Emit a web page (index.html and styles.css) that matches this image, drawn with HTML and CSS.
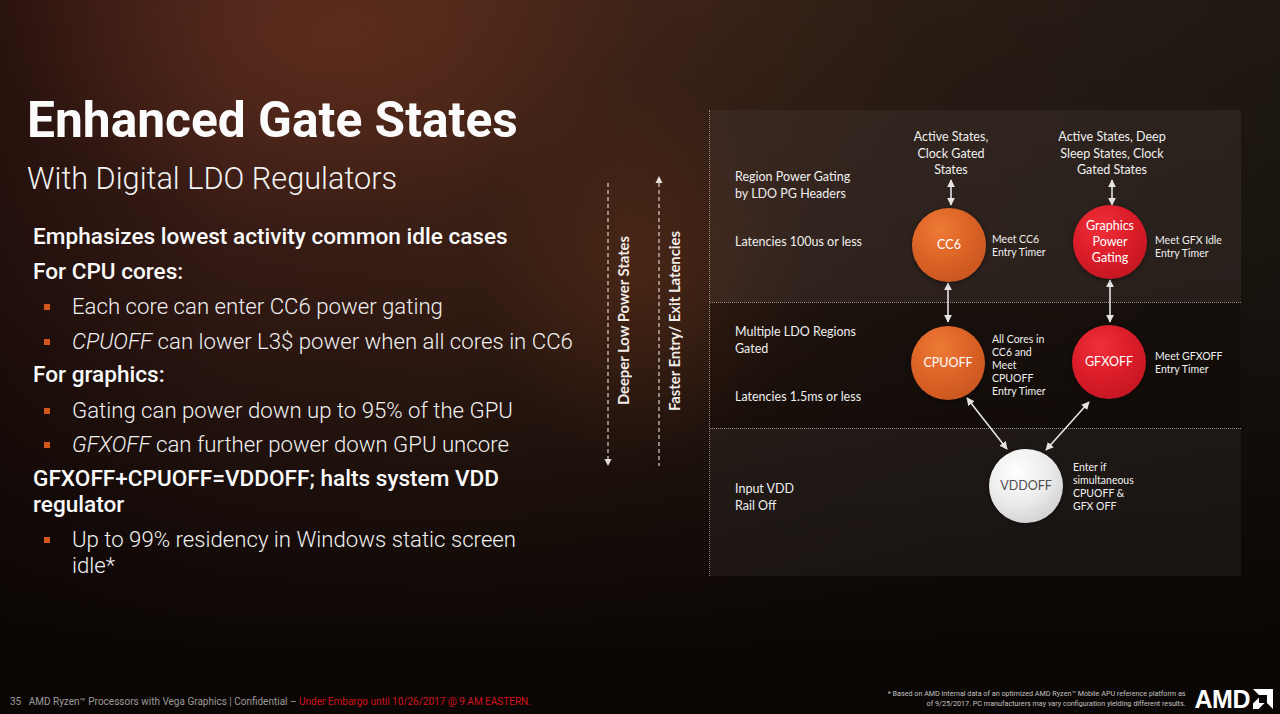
FILE: index.html
```html
<!DOCTYPE html>
<html>
<head>
<meta charset="utf-8">
<link rel="stylesheet" href="styles.css">
</head>
<body>
<div class="slide">
  <div class="main">
    <div class="left">
      <h1 class="title">Enhanced Gate States</h1>
      <div class="subtitle">With Digital LDO Regulators</div>
      <ul class="points">
        <li class="lvl1">Emphasizes lowest activity common idle cases</li>
        <li class="lvl1">For CPU cores:</li>
        <li class="lvl2"><span>Each core can enter CC6 power gating</span></li>
        <li class="lvl2"><span><i>CPUOFF</i> can lower L3$ power when all cores in CC6</span></li>
        <li class="lvl1">For graphics:</li>
        <li class="lvl2"><span>Gating can power down up to 95% of the GPU</span></li>
        <li class="lvl2"><span><i>GFXOFF</i> can further power down GPU uncore</span></li>
        <li class="lvl1">GFXOFF+CPUOFF=VDDOFF; halts system VDD<br>regulator</li>
        <li class="lvl2"><span>Up to 99% residency in Windows static screen<br>idle*</span></li>
      </ul>
    </div>

    <div class="axes">
      <svg class="axis-line down" width="10" height="294" viewBox="0 0 10 294">
        <line x1="5" y1="9" x2="5" y2="286" stroke="#d9d2cc" stroke-width="1.2" stroke-dasharray="4 3"/>
        <polygon points="1.5,285 8.5,285 5,292" fill="#e6e0da"/>
      </svg>
      <div class="axis-text">Deeper Low Power States</div>
      <svg class="axis-line up" width="10" height="294" viewBox="0 0 10 294">
        <polygon points="1.5,9 8.5,9 5,2" fill="#e6e0da"/>
        <line x1="5" y1="9" x2="5" y2="292" stroke="#d9d2cc" stroke-width="1.2" stroke-dasharray="4 3"/>
      </svg>
      <div class="axis-text">Faster Entry/ Exit Latencies</div>
    </div>

    <div class="diagram">
      <div class="band band-top">
        <div class="band-line">Region Power Gating<br>by LDO PG Headers</div>
        <div class="band-line gap-top">Latencies 100us or less</div>
      </div>
      <div class="band band-mid">
        <div class="band-line">Multiple LDO Regions<br>Gated</div>
        <div class="band-line gap-mid">Latencies 1.5ms or less</div>
      </div>
      <div class="band band-bot">
        <div class="band-line">Input VDD<br>Rail Off</div>
      </div>

      <svg class="links" width="532" height="466" viewBox="0 0 532 466">
        <defs>
          <marker id="ah" viewBox="0 0 10 10" refX="9" refY="5" markerWidth="5" markerHeight="5" orient="auto-start-reverse" markerUnits="strokeWidth">
            <path d="M0,0 L10,5 L0,10 Z" fill="#e4e4e4"/>
          </marker>
        </defs>
        <g stroke="#e4e4e4" stroke-width="1.6" fill="none" marker-start="url(#ah)" marker-end="url(#ah)">
          <line x1="242" y1="70" x2="242" y2="95"/>
          <line x1="403" y1="70" x2="403" y2="95"/>
          <line x1="239" y1="173" x2="239" y2="212"/>
          <line x1="401" y1="170" x2="401" y2="212"/>
          <line x1="258" y1="288" x2="298" y2="339"/>
          <line x1="380" y1="292" x2="337" y2="340"/>
        </g>
      </svg>

      <div class="label top-label tl1">Active States,<br>Clock Gated<br>States</div>
      <div class="label top-label tl2">Active States, Deep<br>Sleep States, Clock<br>Gated States</div>

      <div class="node orange n-cc6">CC6</div>
      <div class="node red n-gpg">Graphics<br>Power<br>Gating</div>
      <div class="node orange n-cpu">CPUOFF</div>
      <div class="node red n-gfx">GFXOFF</div>
      <div class="node white n-vdd">VDDOFF</div>

      <div class="label side s-cc6">Meet CC6<br>Entry Timer</div>
      <div class="label side s-gpg">Meet GFX Idle<br>Entry Timer</div>
      <div class="label side s-cpu">All Cores in<br>CC6 and<br>Meet<br>CPUOFF<br>Entry Timer</div>
      <div class="label side s-gfx">Meet GFXOFF<br>Entry Timer</div>
      <div class="label side s-vdd">Enter if<br>simultaneous<br>CPUOFF &amp;<br>GFX OFF</div>
    </div>
  </div>

  <footer class="footer">
    <div class="foot-left">35&nbsp;&nbsp;&nbsp;AMD Ryzen™ Processors with Vega Graphics | Confidential – <span class="embargo">Under Embargo until 10/26/2017 @ 9 AM EASTERN.</span></div>
    <div class="foot-right">
      <div class="footnote">* Based on AMD internal data of an optimized AMD Ryzen™ Mobile APU reference platform as<br>of 9/25/2017. PC manufacturers may vary configuration yielding different results.</div>
      <div class="logo">
        <span class="logo-text">AMD</span>
        <svg class="logo-mark" width="20" height="20" viewBox="0 0 50.6 50.6">
          <path d="M0 0 H50.6 V50.6 L35.4 35.4 V15.2 H15.2 Z" fill="#fff"/>
          <path d="M15.1 21.3 L0 36.4 V50.6 H14.2 L29.3 35.4 H15.1 Z" fill="#fff"/>
        </svg>
      </div>
    </div>
  </footer>
</div>
</body>
</html>
```

FILE: styles.css
```css
html, body {
  margin: 0;
  padding: 0;
  width: 1280px;
  height: 714px;
  overflow: hidden;
  background: #0b0706;
}

.slide {
  width: 1280px;
  height: 714px;
  display: flex;
  flex-direction: column;
  color: #fff;
  font-family: Roboto, "Liberation Sans", sans-serif;
  background:
    radial-gradient(ellipse 420px 260px at 330px 40px, rgba(115, 52, 30, 0.5), rgba(115, 52, 30, 0) 75%),
    radial-gradient(ellipse 220px 260px at 640px 270px, rgba(120, 60, 28, 0.35), rgba(120, 60, 28, 0) 75%),
    linear-gradient(to bottom, rgba(8, 5, 4, 0) 0%, rgba(8, 5, 4, 0.25) 35%, rgba(8, 5, 4, 0.7) 70%, rgba(8, 5, 4, 0.95) 92%),
    linear-gradient(to right, #2b130e 0%, #44221a 18%, #472619 35%, #3a2217 55%, #2a1d15 72%, #1f1912 100%);
}

.main {
  flex: 1;
  display: flex;
  align-items: flex-start;
}

/* ---------- left text column ---------- */
.left {
  width: 563px;
  padding: 92px 0 0 27px;
  flex: none;
}

.title {
  margin: 0;
  font-size: 49.7px;
  line-height: 56px;
  font-weight: 700;
  letter-spacing: 0;
  color: #fbfbfb;
}

.subtitle {
  margin-top: 14px;
  font-size: 30.7px;
  line-height: 34px;
  font-weight: 300;
  color: #f2f2f2;
}

.points {
  list-style: none;
  margin: 28px 0 0 6px;
  padding: 0;
}

.points li {
  line-height: 26px;
  margin-top: 8.5px;
}

.points li:first-child {
  margin-top: 0;
}

.lvl1 {
  font-size: 22.6px;
  font-weight: 500;
  color: #fafafa;
  white-space: nowrap;
}

.lvl2 {
  display: flex;
  align-items: flex-start;
  font-size: 22.2px;
  font-weight: 300;
  color: #f0f0f0;
  white-space: nowrap;
}

.lvl2::before {
  content: "";
  flex: none;
  width: 6px;
  height: 6px;
  margin: 11px 22px 0 11px;
  background: #d4561c;
}

.lvl2 i {
  font-style: italic;
}

/* ---------- vertical axes ---------- */
.axes {
  width: 119px;
  flex: none;
  margin-top: 174px;
  height: 294px;
  display: flex;
  align-items: center;
}

.axis-line {
  flex: none;
  display: block;
}

.axis-line.down {
  margin-left: 13px;
}

.axis-line.up {
  margin-left: 22px;
}

.axis-text {
  writing-mode: vertical-rl;
  transform: rotate(180deg);
  font-family: Lato, "Open Sans", sans-serif;
  font-size: 14.8px;
  font-weight: 700;
  color: #f1ece8;
  width: 17px;
  margin-left: 2px;
  line-height: 17px;
  white-space: nowrap;
}

/* ---------- diagram ---------- */
.diagram {
  position: relative;
  flex: none;
  width: 532px;
  height: 466px;
  margin-top: 110px;
  display: flex;
  flex-direction: column;
  border-left: 1px dotted rgba(215, 210, 205, 0.6);
  box-sizing: border-box;
  font-family: Lato, "Open Sans", sans-serif;
  color: #efefef;
}

.band {
  box-sizing: border-box;
  padding-left: 25px;
  font-size: 12.5px;
  line-height: 16.5px;
}

.band-top {
  height: 192px;
  padding-top: 59px;
  background: rgba(70, 60, 55, 0.32);
}

.band-mid {
  height: 126px;
  padding-top: 21px;
  border-top: 1px dotted rgba(190, 185, 180, 0.75);
  background: rgba(10, 6, 4, 0.22);
}

.band-bot {
  height: 148px;
  padding-top: 52px;
  border-top: 1px dotted rgba(190, 185, 180, 0.75);
  background: rgba(70, 65, 62, 0.22);
}

.gap-top {
  margin-top: 32px;
}

.gap-mid {
  margin-top: 32px;
}

.links {
  position: absolute;
  left: -1px;
  top: 0;
}

.label {
  position: absolute;
  color: #f0f0f0;
}

.top-label {
  font-size: 12.5px;
  line-height: 16.5px;
  text-align: center;
  top: 19px;
}

.tl1 {
  left: 171px;
  width: 140px;
}

.tl2 {
  left: 322px;
  width: 160px;
}

.side {
  font-size: 10.5px;
  line-height: 13px;
}

.s-cc6 { left: 282px; top: 123px; }
.s-gpg { left: 445px; top: 124px; }
.s-cpu { left: 282px; top: 223px; }
.s-gfx { left: 445px; top: 240px; }
.s-vdd { left: 363px; top: 351px; }

.node {
  position: absolute;
  width: 74px;
  height: 74px;
  border-radius: 50%;
  display: flex;
  align-items: center;
  justify-content: center;
  text-align: center;
  font-size: 12.5px;
  line-height: 16px;
  color: #fff;
  box-shadow: 0 1px 4px rgba(0, 0, 0, 0.45);
}

.orange {
  background: radial-gradient(circle at 38% 30%, #ee7a36 0%, #dc6326 45%, #bf4e1c 100%);
}

.red {
  background: radial-gradient(circle at 38% 30%, #f0303a 0%, #da1d29 45%, #b8131e 100%);
}

.white {
  background: radial-gradient(circle at 38% 30%, #ffffff 0%, #ececec 45%, #c2c2c2 100%);
  color: #4e4e4e;
}

.n-cc6 { left: 202px; top: 98px; }
.n-gpg { left: 363px; top: 95px; }
.n-cpu { left: 201px; top: 216px; }
.n-gfx { left: 362px; top: 215px; }
.n-vdd { left: 279px; top: 339px; }

/* ---------- footer ---------- */
.footer {
  height: 30px;
  flex: none;
  display: flex;
  align-items: center;
  justify-content: space-between;
  padding: 0 7px 0 10px;
}

.foot-left {
  font-size: 10px;
  color: #9c9a99;
  white-space: nowrap;
  margin-top: 4px;
}

.embargo {
  color: #d3121c;
}

.foot-right {
  display: flex;
  align-items: center;
}

.footnote {
  font-size: 7.2px;
  line-height: 10px;
  text-align: right;
  color: #c4c2c0;
  white-space: nowrap;
}

.logo {
  display: flex;
  align-items: center;
  margin-left: 9px;
}

.logo-text {
  font-family: "Liberation Sans", Arial, sans-serif;
  font-weight: 700;
  font-size: 25px;
  line-height: 25px;
  letter-spacing: -0.5px;
  color: #fff;
}

.logo-mark {
  display: block;
  margin-left: 3px;
}
```
